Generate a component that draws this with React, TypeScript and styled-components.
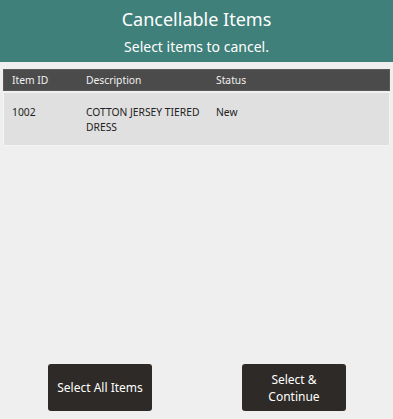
import React, { ReactElement } from 'react'
import styled, { createGlobalStyle } from 'styled-components'

const GlobalStyle = createGlobalStyle`
  html, body {
    margin: 0;
    padding: 0;
    background: #efefef;
  }
  * {
    box-sizing: border-box;
  }
`

const Page = styled.div`
  width: 393px;
  height: 419px;
  display: flex;
  flex-direction: column;
  background: #efefef;
  font-family: 'Noto Sans', 'Open Sans', sans-serif;
`

const Banner = styled.header`
  height: 62px;
  background: #3f807a;
  color: #ffffff;
  text-align: center;
  display: flex;
  flex-direction: column;
  align-items: center;
  padding-top: 6px;
`

const Title = styled.h1`
  margin: 0;
  font-size: 18px;
  line-height: 26px;
  font-weight: normal;
`

const Subtitle = styled.h2`
  margin: 4px 0 0 0;
  font-size: 14px;
  line-height: 22px;
  font-weight: normal;
`

const Table = styled.div`
  margin: 7px 3px 0 3px;
  display: flex;
  flex-direction: column;
`

const Row = styled.div<{ $head?: boolean }>`
  display: grid;
  grid-template-columns: 74px 130px 1fr;
  padding-left: 8px;
  font-size: 10.3px;
  line-height: 15px;
  height: ${(p) => (p.$head ? '22px' : '54px')};
  align-items: ${(p) => (p.$head ? 'center' : 'start')};
  padding-top: ${(p) => (p.$head ? '0' : '12px')};
  background: ${(p) => (p.$head ? '#4b4b4b' : '#e0e0e0')};
  color: ${(p) => (p.$head ? '#f0f0f0' : '#222222')};
  border: 1px solid ${(p) => (p.$head ? '#5a5a5a' : '#f4f4f4')};
  margin-top: ${(p) => (p.$head ? '0' : '1px')};
`

const Cell = styled.span``

const Spacer = styled.div`
  flex: 1;
`

const Actions = styled.div`
  display: flex;
  justify-content: space-between;
  padding: 0 47px 8px 48px;
`

const Button = styled.button`
  width: 104px;
  height: 47px;
  border: none;
  border-radius: 3px;
  background: #2e2a27;
  color: #ffffff;
  font-family: 'Noto Sans', 'Open Sans', sans-serif;
  font-size: 12px;
  line-height: 17px;
  padding: 0 2px;
  white-space: nowrap;
`

function App(): ReactElement {
  return (
    <Page>
      <GlobalStyle />
      <Banner>
        <Title>Cancellable Items</Title>
        <Subtitle>Select items to cancel.</Subtitle>
      </Banner>
      <Table>
        <Row $head>
          <Cell>Item ID</Cell>
          <Cell>Description</Cell>
          <Cell>Status</Cell>
        </Row>
        <Row>
          <Cell>1002</Cell>
          <Cell>COTTON JERSEY TIERED DRESS</Cell>
          <Cell>New</Cell>
        </Row>
      </Table>
      <Spacer />
      <Actions>
        <Button>Select All Items</Button>
        <Button>
          Select &amp;
          <br />
          Continue
        </Button>
      </Actions>
    </Page>
  )
}

export default App
